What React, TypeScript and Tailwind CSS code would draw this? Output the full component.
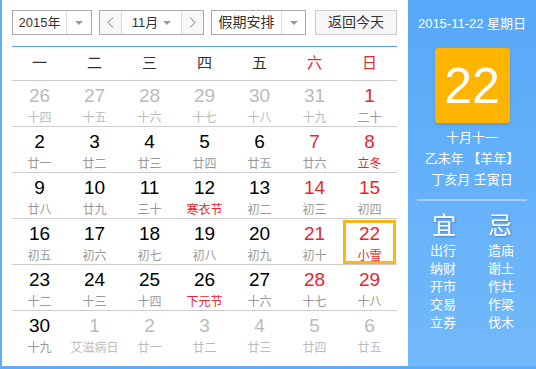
import React from 'react';

type Day = { n: number; l: string; kind?: 'off' | 'red'; fest?: boolean; today?: boolean };

const weeks: Day[][] = [
  [
    { n: 26, l: '十四', kind: 'off' }, { n: 27, l: '十五', kind: 'off' }, { n: 28, l: '十六', kind: 'off' },
    { n: 29, l: '十七', kind: 'off' }, { n: 30, l: '十八', kind: 'off' }, { n: 31, l: '十九', kind: 'off' },
    { n: 1, l: '二十', kind: 'red' },
  ],
  [
    { n: 2, l: '廿一' }, { n: 3, l: '廿二' }, { n: 4, l: '廿三' }, { n: 5, l: '廿四' }, { n: 6, l: '廿五' },
    { n: 7, l: '廿六', kind: 'red' }, { n: 8, l: '立冬', kind: 'red', fest: true },
  ],
  [
    { n: 9, l: '廿八' }, { n: 10, l: '廿九' }, { n: 11, l: '三十' }, { n: 12, l: '寒衣节', fest: true },
    { n: 13, l: '初二' }, { n: 14, l: '初三', kind: 'red' }, { n: 15, l: '初四', kind: 'red' },
  ],
  [
    { n: 16, l: '初五' }, { n: 17, l: '初六' }, { n: 18, l: '初七' }, { n: 19, l: '初八' }, { n: 20, l: '初九' },
    { n: 21, l: '初十', kind: 'red' }, { n: 22, l: '小雪', kind: 'red', fest: true, today: true },
  ],
  [
    { n: 23, l: '十二' }, { n: 24, l: '十三' }, { n: 25, l: '十四' }, { n: 26, l: '下元节', fest: true },
    { n: 27, l: '十六' }, { n: 28, l: '十七', kind: 'red' }, { n: 29, l: '十八', kind: 'red' },
  ],
  [
    { n: 30, l: '十九' }, { n: 1, l: '艾滋病日', kind: 'off' }, { n: 2, l: '廿一', kind: 'off' },
    { n: 3, l: '廿二', kind: 'off' }, { n: 4, l: '廿三', kind: 'off' }, { n: 5, l: '廿四', kind: 'off' },
    { n: 6, l: '廿五', kind: 'off' },
  ],
];

const yi = ['出行', '纳财', '开市', '交易', '立券'];
const ji = ['造庙', '谢土', '作灶', '作梁', '伐木'];

const cjk = "font-['Liberation_Sans','Noto_Sans_CJK_SC',sans-serif]";

function Caret() {
  return <span className="inline-block w-0 h-0 border-x-[4px] border-x-transparent border-t-[4px] border-t-[#999]" />;
}

export default function App() {
  return (
    <div className={`flex h-[369px] w-[536px] bg-white border-l-2 border-b-[3px] border-[#5eacf8] ${cjk}`}>
      <div className="flex-1 pl-[10px] pr-[11px] pt-[10px]">
        {/* toolbar */}
        <div className="flex h-[25px] text-[13px] text-[#333]">
          <div className="flex w-[80px] border border-[#aaa] bg-white">
            <div className="flex-1 flex items-center justify-center">2015年</div>
            <div className="w-[25px] border-l border-[#ddd] flex items-center justify-center"><Caret /></div>
          </div>
          <div className="ml-[7px] flex w-[105px] border border-[#aaa]">
            <div className="w-[22px] bg-[#f7f7f7] border-r border-[#ddd] flex items-center justify-center">
              <svg width="7" height="11" viewBox="0 0 7 11"><path d="M6 0.5 1 5.5 6 10.5" fill="none" stroke="#777" strokeWidth="1" /></svg>
            </div>
            <div className="flex-1 flex items-center justify-center gap-[5px] bg-white">11月 <Caret /></div>
            <div className="w-[22px] bg-[#f7f7f7] border-l border-[#ddd] flex items-center justify-center">
              <svg width="7" height="11" viewBox="0 0 7 11"><path d="M1 0.5 6 5.5 1 10.5" fill="none" stroke="#777" strokeWidth="1" /></svg>
            </div>
          </div>
          <div className="ml-[7px] flex w-[95px] border border-[#aaa] bg-white text-[14px]">
            <div className="flex-1 flex items-center justify-center">假期安排</div>
            <div className="w-[24px] border-l border-[#ddd] flex items-center justify-center"><Caret /></div>
          </div>
          <div className="ml-[9px] w-[82px] border border-[#ccc] bg-[#f6f6f6] flex items-center justify-center text-[14px]">返回今天</div>
        </div>

        {/* calendar */}
        <div className="mt-[11px] border-t border-[#4fa3f5]">
          <div className="grid grid-cols-7 h-[34px] border-b border-[#ccc] text-[15px] items-center text-center">
            {['一', '二', '三', '四', '五'].map((w) => (
              <div key={w} className="text-[#333]">{w}</div>
            ))}
            <div className="text-[#e6262e]">六</div>
            <div className="text-[#e6262e]">日</div>
          </div>
          {weeks.map((wk, i) => (
            <div key={i} className={`grid grid-cols-7 h-[46px] ${i < 5 ? 'border-b border-[#ccc]' : ''}`}>
              {wk.map((d, j) => {
                const numColor = d.kind === 'off' ? 'text-[#bbb]' : d.kind === 'red' ? 'text-[#e6262e]' : 'text-black';
                const lunColor = d.fest ? 'text-[#e6262e]' : d.kind === 'off' ? 'text-[#bbb]' : 'text-[#999]';
                return (
                  <div key={j} className="relative flex flex-col items-center pt-[4px]">
                    <div className={`text-[19px] leading-[22px] ${numColor}`}>{d.n}</div>
                    <div className={`text-[12px] leading-[16px] mt-[3px] ${lunColor}`}>{d.l}</div>
                    {d.today && <div className="absolute left-[1px] right-[1px] top-[1px] bottom-0 border-[3px] border-[#fbb614]" />}
                  </div>
                );
              })}
            </div>
          ))}
        </div>
      </div>

      {/* side panel */}
      <div className="w-[128px] bg-gradient-to-b from-[#57a8f8] to-[#72b9fb] text-white flex flex-col items-center pt-[15px]">
        <div className="text-[13px] leading-[18px]">2015-11-22 星期日</div>
        <div className="mt-[15px] w-[75px] h-[75px] rounded-[3px] bg-[#ffb400] shadow-[0_1px_3px_rgba(0,0,0,0.15)] flex items-center justify-center text-[50px] leading-none">22</div>
        <div className="mt-[4px] text-[13px] leading-[21px] text-center">
          <div>十月十一</div>
          <div>乙未年 【羊年】</div>
          <div>丁亥月 壬寅日</div>
        </div>
        <div className="mt-[9px] w-[110px] h-[2px] bg-[#a5cffb]" />
        <div className="mt-[11px] flex gap-[32px] text-[24px] leading-[28px] [text-shadow:1px_1px_2px_rgba(0,0,80,0.3)]">
          <div>宜</div>
          <div>忌</div>
        </div>
        <div className="mt-[2px] flex gap-[32px] text-[13px] leading-[18px]">
          <div className="flex flex-col">{yi.map((t) => <div key={t}>{t}</div>)}</div>
          <div className="flex flex-col">{ji.map((t) => <div key={t}>{t}</div>)}</div>
        </div>
      </div>
    </div>
  );
}
